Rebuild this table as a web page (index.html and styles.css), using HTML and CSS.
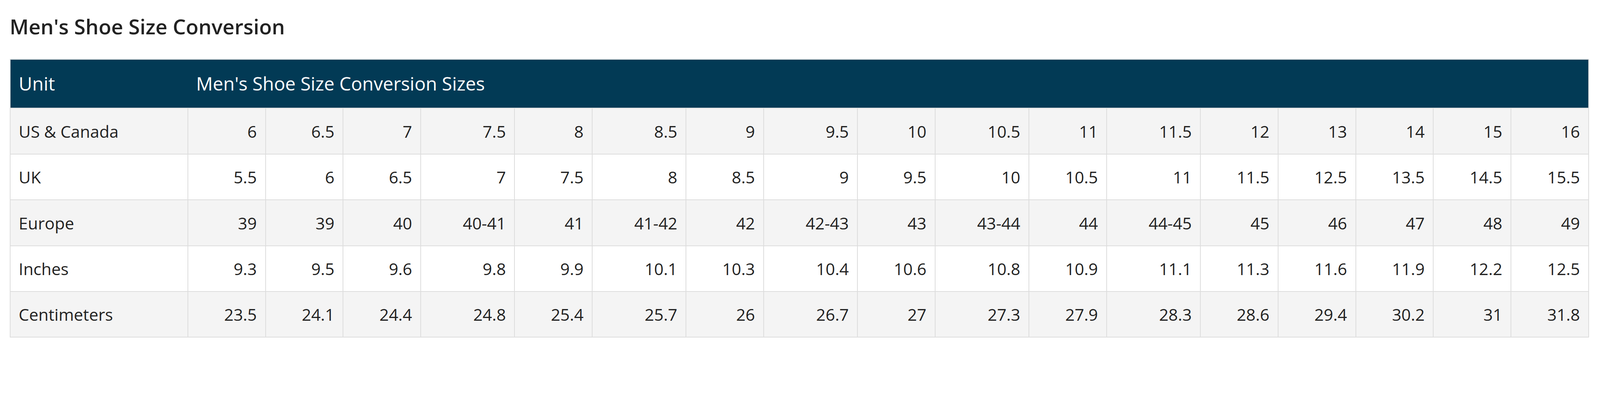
FILE: index.html
```html
<!DOCTYPE html>
<html lang="en">
<head>
<meta charset="utf-8">
<title>Men's Shoe Size Conversion</title>
<link rel="stylesheet" href="styles.css">
</head>
<body>
<h2 class="title">Men's Shoe Size Conversion</h2>
<table class="sizes">
  <thead>
    <tr>
      <th class="unit">Unit</th>
      <th class="span" colspan="17">Men's Shoe Size Conversion Sizes</th>
    </tr>
  </thead>
  <tbody>
    <tr>
      <td class="label">US &amp; Canada</td>
      <td>6</td><td>6.5</td><td>7</td><td>7.5</td><td>8</td><td>8.5</td><td>9</td><td>9.5</td><td>10</td><td>10.5</td><td>11</td><td>11.5</td><td>12</td><td>13</td><td>14</td><td>15</td><td>16</td>
    </tr>
    <tr>
      <td class="label">UK</td>
      <td>5.5</td><td>6</td><td>6.5</td><td>7</td><td>7.5</td><td>8</td><td>8.5</td><td>9</td><td>9.5</td><td>10</td><td>10.5</td><td>11</td><td>11.5</td><td>12.5</td><td>13.5</td><td>14.5</td><td>15.5</td>
    </tr>
    <tr>
      <td class="label">Europe</td>
      <td>39</td><td>39</td><td>40</td><td>40-41</td><td>41</td><td>41-42</td><td>42</td><td>42-43</td><td>43</td><td>43-44</td><td>44</td><td>44-45</td><td>45</td><td>46</td><td>47</td><td>48</td><td>49</td>
    </tr>
    <tr>
      <td class="label">Inches</td>
      <td>9.3</td><td>9.5</td><td>9.6</td><td>9.8</td><td>9.9</td><td>10.1</td><td>10.3</td><td>10.4</td><td>10.6</td><td>10.8</td><td>10.9</td><td>11.1</td><td>11.3</td><td>11.6</td><td>11.9</td><td>12.2</td><td>12.5</td>
    </tr>
    <tr>
      <td class="label">Centimeters</td>
      <td>23.5</td><td>24.1</td><td>24.4</td><td>24.8</td><td>25.4</td><td>25.7</td><td>26</td><td>26.7</td><td>27</td><td>27.3</td><td>27.9</td><td>28.3</td><td>28.6</td><td>29.4</td><td>30.2</td><td>31</td><td>31.8</td>
    </tr>
  </tbody>
</table>
</body>
</html>
```

FILE: styles.css
```css
:root {
  /* one reference pixel, scaled to the viewport width */
  --u: calc(100vw / 4646);
}

html, body {
  margin: 0;
  padding: 0;
  background: #ffffff;
}

body {
  padding: calc(41 * var(--u)) calc(32 * var(--u)) 0 calc(28 * var(--u));
  font-family: "Open Sans", "Noto Sans", sans-serif;
  color: #222222;
  overflow: hidden;
}

.title {
  margin: 0 0 calc(58 * var(--u)) 0;
  font-size: calc(60 * var(--u));
  line-height: calc(72 * var(--u));
  font-weight: 600;
  color: #222222;
}

.sizes {
  width: 100%;
  border-collapse: collapse;
  border: calc(3 * var(--u)) solid #dddddd;
  table-layout: auto;
}

.sizes th {
  background: #023a55;
  color: #ffffff;
  font-weight: 400;
  font-size: calc(54 * var(--u));
  line-height: calc(80 * var(--u));
  padding: calc(30 * var(--u)) calc(24 * var(--u));
  text-align: left;
  border-top: calc(3 * var(--u)) solid #dddddd;
  border-bottom: calc(3 * var(--u)) solid #dddddd;
}

.sizes th.unit {
  border-right: none;
}

.sizes th.span {
  border-left: none;
}

.sizes td {
  font-size: calc(48 * var(--u));
  line-height: calc(72 * var(--u));
  padding: calc(30 * var(--u)) calc(24 * var(--u)) calc(29 * var(--u)) calc(24 * var(--u));
  text-align: right;
  border: calc(3 * var(--u)) solid #dddddd;
  color: #222222;
  white-space: nowrap;
}

.sizes td.label {
  width: calc(466 * var(--u));
  text-align: left;
}

.sizes tbody tr:nth-child(odd) td {
  background: #f4f4f4;
}

.sizes tbody tr:nth-child(even) td {
  background: #ffffff;
}
```
